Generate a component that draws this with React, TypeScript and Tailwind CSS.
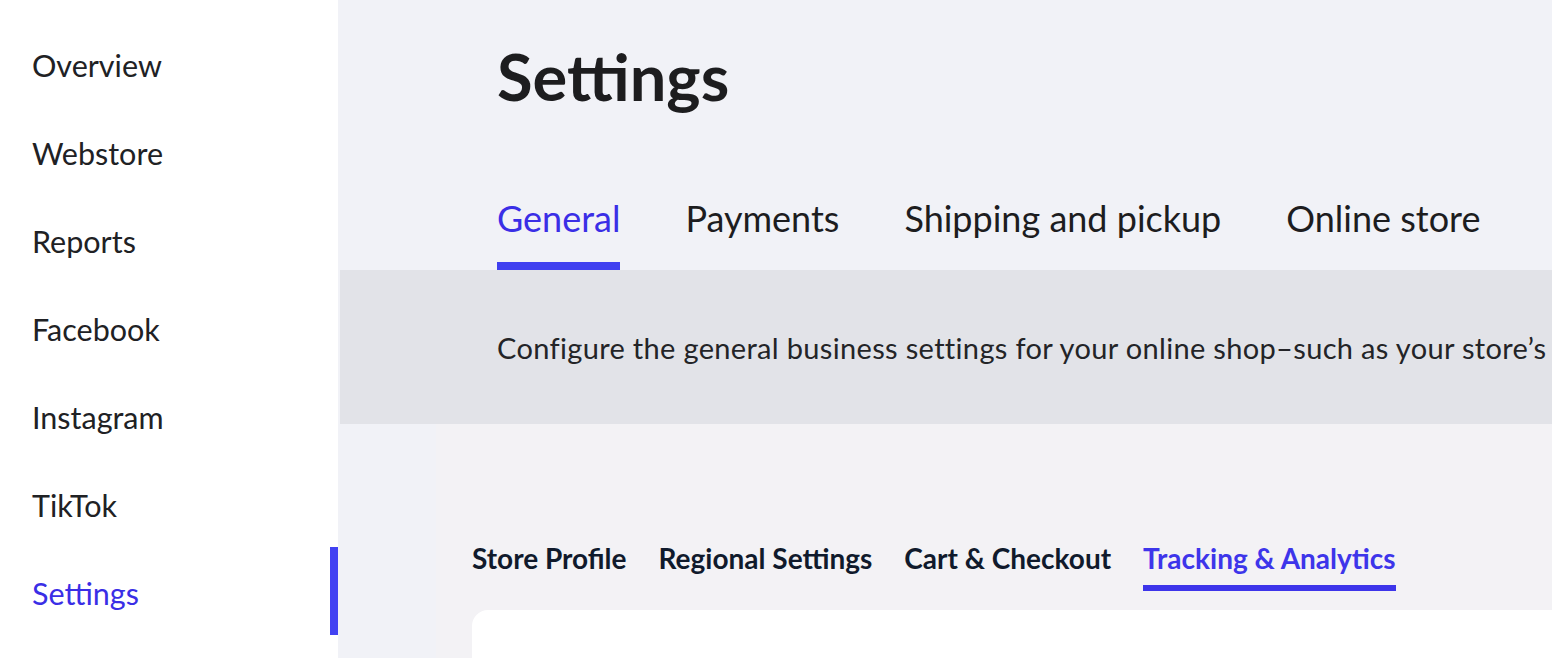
const navItems = ['Overview', 'Webstore', 'Reports', 'Facebook', 'Instagram', 'TikTok', 'Settings'];
const tabs = ['General', 'Payments', 'Shipping and pickup', 'Online store'];
const subTabs = ['Store Profile', 'Regional Settings', 'Cart & Checkout', 'Tracking & Analytics'];

function Sidebar({ active }: { active: string }) {
  return (
    <aside className="w-[338px] shrink-0 bg-white pt-[21px]">
      {navItems.map((item) => {
        const isActive = item === active;
        return (
          <div key={item} className="relative flex h-[88px] items-center pl-[32px]">
            <span className={`text-[30.5px] leading-none ${isActive ? 'text-[#3a2ee6]' : 'text-[#202124]'}`}>
              {item}
            </span>
            {isActive && <span className="absolute right-0 top-[-2px] h-[88px] w-[8px] bg-[#4242f2]" />}
          </div>
        );
      })}
    </aside>
  );
}

export default function App() {
  return (
    <div className="flex h-[658px] w-[1552px] overflow-hidden bg-[#f1f2f7] font-['Lato',sans-serif]">
      <Sidebar active="Settings" />

      <main className="flex min-w-0 flex-1 flex-col">
        {/* page header */}
        <div className="pl-[159px] pt-[44px]">
          <h1 className="text-[65px] font-bold leading-none text-[#1d1d1f]">Settings</h1>
          <nav className="mt-[91px] flex gap-[65px]">
            {tabs.map((tab, i) => (
              <div
                key={tab}
                className={`whitespace-nowrap border-b-[8px] pb-[26px] text-[36px] leading-none ${
                  i === 0 ? 'border-[#4040f0] text-[#3a2ee6]' : 'border-transparent text-[#1d1d1f]'
                }`}
              >
                {tab}
              </div>
            ))}
          </nav>
        </div>

        {/* description band */}
        <div className="ml-[2px] flex h-[154px] shrink-0 items-center bg-[#e2e3e8] pl-[157px]">
          <p className="whitespace-nowrap text-[29px] leading-none tracking-[0.33px] text-[#232427]">
            Configure the general business settings for your online shop–such as your store’s
          </p>
        </div>

        {/* settings panel */}
        <div className="flex-1 pl-[98px]">
          <div className="h-full bg-[#f3f2f5] pl-[36px] pt-[120px]">
            <div className="flex gap-[32px]">
              {subTabs.map((tab, i) => (
                <div
                  key={tab}
                  className={`whitespace-nowrap border-b-[6px] pb-[13px] text-[28px] font-bold leading-none ${
                    i === 3 ? 'border-[#3d35ea] text-[#3d35ea]' : 'border-transparent text-[#101a2c]'
                  }`}
                >
                  {tab}
                </div>
              ))}
            </div>
            <div className="mt-[19px] h-[200px] rounded-tl-[16px] bg-white" />
          </div>
        </div>
      </main>
    </div>
  );
}
